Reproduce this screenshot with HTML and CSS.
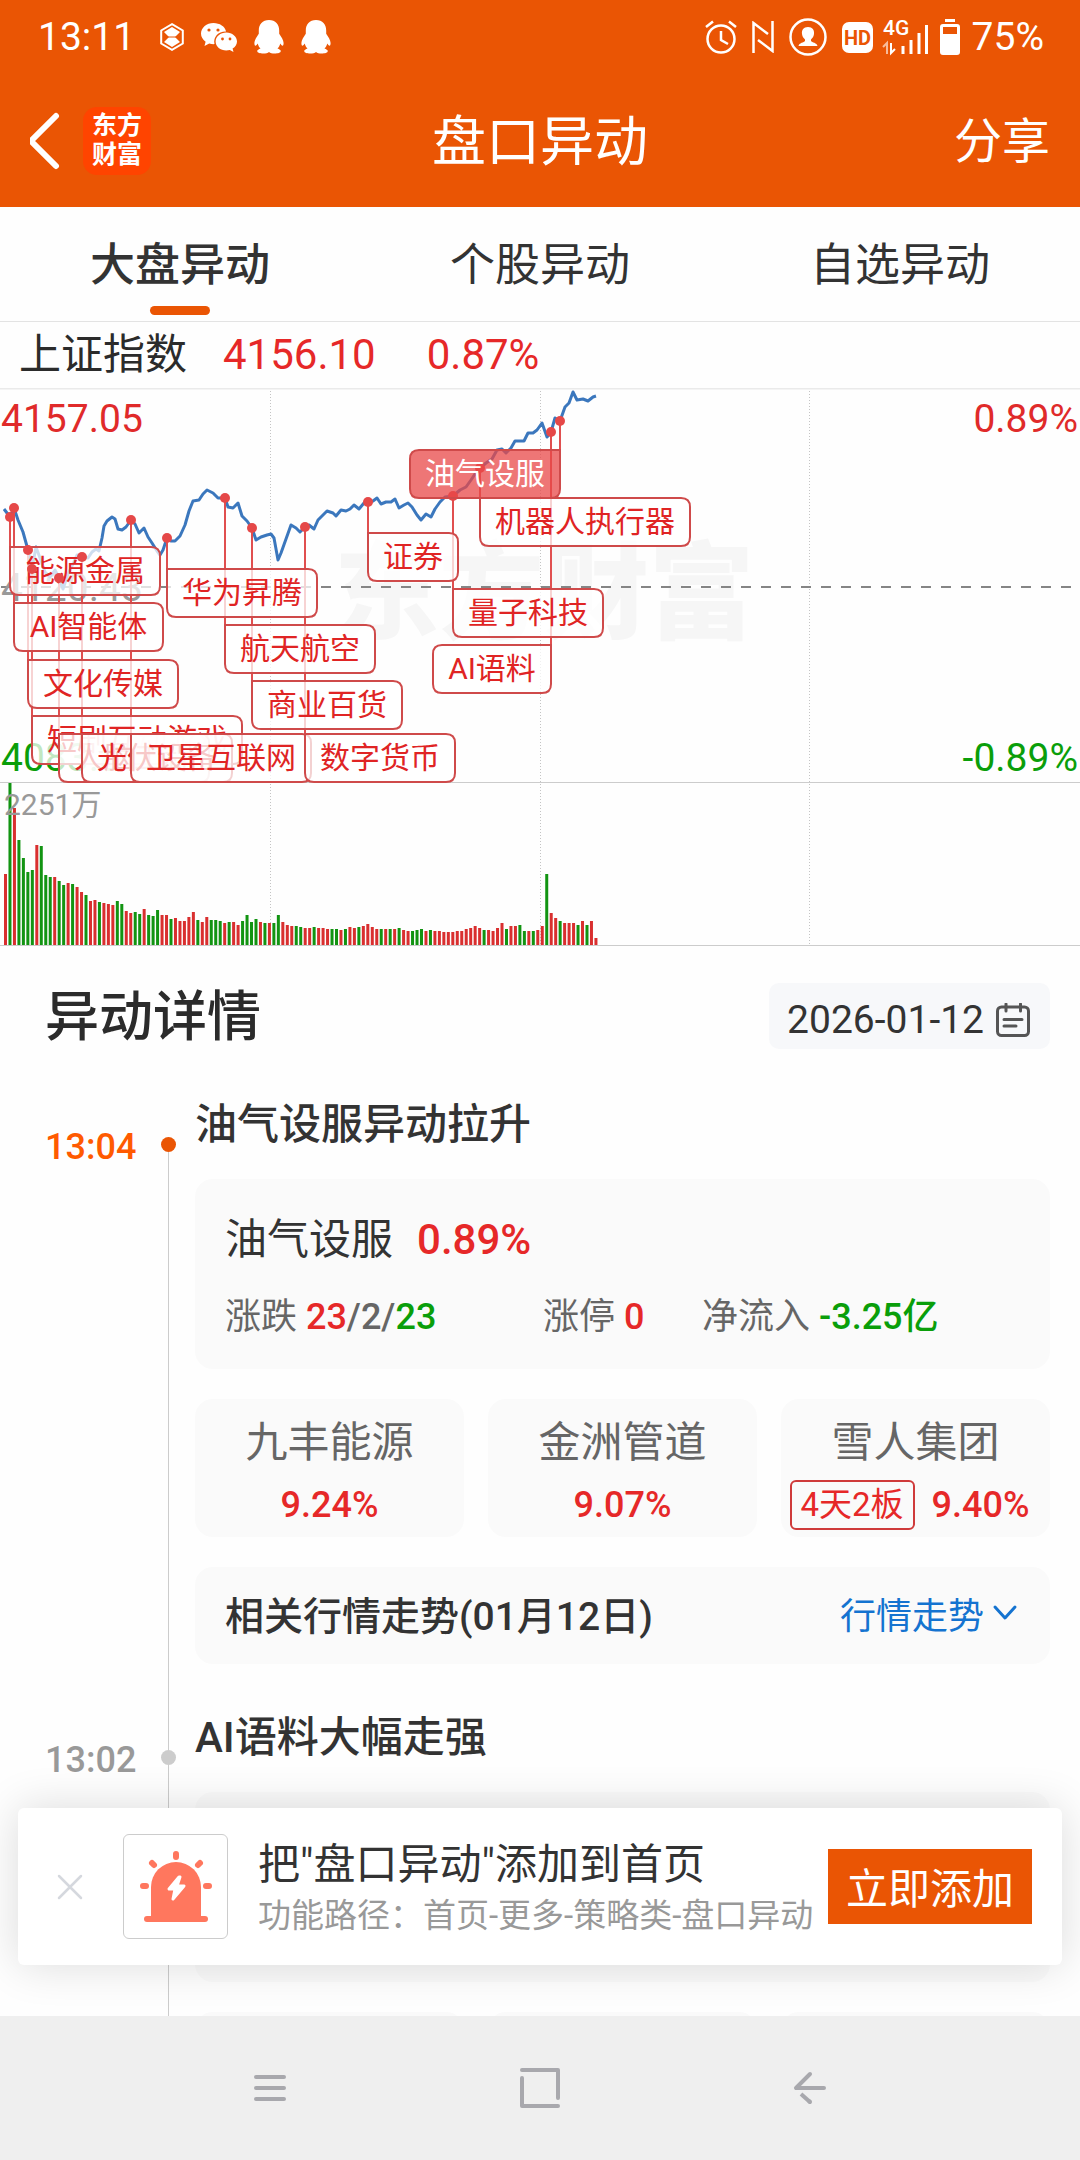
FILE: index.html
```html
<!DOCTYPE html>
<html lang="zh-CN">
<head>
<meta charset="utf-8">
<meta name="viewport" content="width=device-width, initial-scale=1">
<title>盘口异动</title>
<link rel="stylesheet" href="styles.css">
</head>
<body>
<div class="screen">
  <header class="header">
    <div class="status">
      <div class="status-group">
        <span class="status-time">13:11</span>
        <svg width="24" height="28" viewBox="0 0 24 28" fill="none" stroke="#fff" stroke-width="2"><path d="M12 1.200L22.800 7.500V20.500L12 26.800L1.200 20.500V7.500Z"/><path d="M12 4l8 5-5 5 5 5-8 5-8-5 5-5-5-5z" fill="#fff" stroke="none"/><path d="M7 14h10" stroke="#EA5504" stroke-width="1"/></svg>
        <svg width="36" height="30" viewBox="0 0 36 30"><path fill="#fff" d="M12.500 1C5.600 1 0 5.700 0 11.600c0 3.300 1.800 6.200 4.600 8.200L3.500 24l4.700-2.500c1.800.500 3.500.700 5.300.6-1.600-7.600 4.500-13 11.600-12.600C24 4.500 18.800 1 12.500 1z"/><path fill="#fff" d="M36 19.500c0-5-4.800-9-10.700-9s-10.700 4-10.700 9 4.800 9 10.700 9c1.200 0 2.400-.2 3.500-.5l3.700 2-.9-3.400c2.700-1.700 4.400-4.300 4.400-7.100z"/><g fill="#EA5504"><circle cx="8" cy="8" r="1.600"/><circle cx="17" cy="8" r="1.600"/><circle cx="21.500" cy="17" r="1.400"/><circle cx="29" cy="17" r="1.400"/></g></svg>
        <svg width="30" height="34" viewBox="0 0 30 34"><path id="qq" fill="#fff" d="M15 0C8.500 0 4.800 4.600 4.800 10.500v3.200C3 16.500.4 20 .4 23c0 1.600.4 2.700 1 2.700.8 0 1.700-1.100 2.300-2.300.4 1.800 1.400 3.600 2.800 5-1.700.6-3.300 1.500-3.300 2.700 0 1.800 3 2.500 6 2.500 2.500 0 4.700-.5 5.800-1.700 1.100 1.200 3.300 1.700 5.800 1.700 3 0 6-.7 6-2.500 0-1.200-1.600-2.100-3.300-2.700 1.400-1.400 2.400-3.200 2.800-5 .6 1.200 1.500 2.300 2.300 2.300.6 0 1-1.100 1-2.700 0-3-2.600-6.500-4.400-9.300v-3.200C25.200 4.600 21.500 0 15 0z"/></svg>
        <svg width="30" height="34" viewBox="0 0 30 34"><use href="#qq"/></svg>
      </div>
      <div class="status-right">
        <div class="status-icons">
          <svg width="32" height="34" viewBox="0 0 32 34" fill="none" stroke="#fff" stroke-width="2.500"><circle cx="16" cy="19" r="13.500"/><path d="M16 11v9l7 4M1 7l7-5.500M31 7l-7-5.500"/></svg>
          <svg width="22" height="32" viewBox="0 0 22 32" fill="none" stroke="#fff" stroke-width="2.500"><path d="M1.500 32V2L16 13M20.500 0v30L6 19"/></svg>
          <svg width="38" height="38" viewBox="0 0 38 38"><circle cx="19" cy="19" r="17.500" fill="none" stroke="#fff" stroke-width="2.500"/><path fill="#fff" d="M19 9c-4.500 0-6.500 3-6 7 .3 2.500 1.500 4 3 5.500v1.500c-1 1.500-6 1.800-6.500 5h19c-.5-3.200-5.500-3.500-6.500-5v-1.500c1.500-1.500 2.700-3 3-5.500.5-4-1.500-7-6-7z"/></svg>
          <svg width="31" height="31" viewBox="0 0 31 31"><rect width="31" height="31" rx="7" fill="#fff"/><text x="15.500" y="22.500" text-anchor="middle" font-size="20" font-weight="700" fill="#EA5504">HD</text></svg>
        </div>
        <div class="status-power">
          <svg class="signal" width="45" height="36" viewBox="0 0 45 36"><text x="0" y="16" font-size="21" font-weight="500" fill="#fff">4G</text><path d="M20 27v8M28 21v14M36 14v21M43.500 6v29" stroke="#fff" stroke-width="3"/><path d="M0 28l4-4v11" fill="none" stroke="#fff" stroke-opacity=".6" stroke-width="2"/><path d="M8 24v10l4-4" fill="none" stroke="#fff" stroke-width="2"/></svg>
          <svg width="20" height="36" viewBox="0 0 20 36"><path d="M5 0h10v3H5z" fill="#fff"/><path fill="#fff" fill-rule="evenodd" d="M3 5h14a3 3 0 0 1 3 3v25a3 3 0 0 1-3 3H3a3 3 0 0 1-3-3V8a3 3 0 0 1 3-3zm0 3v7h14V8z"/></svg>
          <span>75%</span>
        </div>
      </div>
    </div>
    <div class="titlebar">
      <div class="titlebar-left">
        <button class="back" type="button" aria-label="返回"><svg width="30" height="60" viewBox="3 0 30 60" fill="none" stroke="#fff" stroke-width="6" stroke-linecap="round" stroke-linejoin="round"><path d="M29 5L4 30l25 25"/></svg></button>
        <span class="brand"><span>东方</span><span>财富</span></span>
      </div>
      <h1 class="title">盘口异动</h1>
      <button class="share" type="button">分享</button>
    </div>
  </header>

  <main class="main">
    <nav class="tabs">
      <button class="tab tab-active" type="button">大盘异动</button>
      <button class="tab" type="button">个股异动</button>
      <button class="tab" type="button">自选异动</button>
    </nav>
    <div class="index-row">
      <span>上证指数</span>
      <span class="up index-value">4156.10</span>
      <span class="up">0.87%</span>
    </div>

    <svg class="chart" id="chart" viewBox="0 388 1080 558" role="img" aria-label="上证指数分时图">
      <text class="watermark" x="544" y="630" text-anchor="middle">东方财富</text>
      <g class="grid-dots"><path d="M270.500 391V945M540.500 391V945M809.500 391V945"/></g>
      <path d="M0 388.500H1080" stroke="#eaeaea" stroke-width="2"/>
      <path d="M0 782.500H1080M0 945.500H1080" stroke="#ccc"/>
      <path d="M1 587H1080" stroke="#858585" stroke-width="2" stroke-dasharray="10 10"/>
      <g class="axis">
        <text class="fill-up" x="1" y="432">4157.05</text>
        <text class="fill-up" x="1078" y="432" text-anchor="end">0.89%</text>
        <text class="fill-muted" x="1" y="601">4120.43</text>
        <text class="fill-down" x="1" y="771">4083.81</text>
        <text class="fill-down" x="1078" y="771" text-anchor="end">-0.89%</text>
      </g>
      <g id="volume"></g>
      <text class="volume-label" x="4" y="815">2251万</text>
      <polyline class="price" points="4,509 10,517 14,508 18,520 23,532 28,550 32,569 36,547 40,558 45,572 50,577 55,570 59,578 63,589 68,574 72,566 77,555 82,557 88,558 92,552 96,549 99,551 102,538 104,526 107,521 112,517 115,519 118,529 122,530 126,527 131,520 135,524 139,533 144,528 148,537 152,543 157,551 160,555 163,550 167,538 171,541 175,541 180,536 185,525 189,511 193,501 199,500 203,494 207,490 213,493 218,498 225,498 228,507 233,508 238,503 242,516 247,521 252,528 256,540 261,537 267,535 271,534 274,538 278,560 281,553 286,539 291,525 296,528 300,532 305,527 309,525 314,529 318,520 323,515 327,511 333,513 336,516 341,510 346,511 350,509 354,505 359,509 364,503 368,502 373,501 377,498 381,504 386,502 391,502 395,499 399,508 404,505 408,503 412,507 417,515 421,520 426,514 431,517 435,509 440,502 445,497 453,496 460,490 466,487 471,480 475,474 480,468 486,463 492,459 497,450 502,449 506,453 511,448 515,441 524,441 528,433 533,433 537,430 542,423 547,437 551,432 555,418 560,421 565,407 569,403 573,392 577,400 583,399 588,401 593,397 596,396"/>
      <g id="stems"></g>
      <g id="labels"></g>
    </svg>

    <section class="details">
      <div class="details-head">
        <h2 class="details-title">异动详情</h2>
        <button class="date" type="button">2026-01-12
          <svg width="34" height="34" viewBox="0 0 34 34" fill="none" stroke="#555" stroke-width="3" stroke-linecap="round"><rect x="1.500" y="4" width="31" height="28.500" rx="4"/><path d="M10 1v7M24.500 1v7M8 16.500h18M8 23h12"/></svg>
        </button>
      </div>

      <article class="event event-latest">
        <time class="event-time">13:04</time>
        <div class="rail"><i class="rail-top"></i><i class="rail-dot"></i><i class="rail-line"></i></div>
        <div class="event-body">
          <h3 class="event-title">油气设服异动拉升</h3>
          <div class="card sector">
            <div class="sector-name">油气设服<b class="up">0.89%</b></div>
            <div class="stats">
              <span>涨跌 <b><span class="up">23</span>/2/<span class="down">23</span></b></span>
              <span>涨停 <b class="up">0</b></span>
              <span>净流入 <b class="down">-3.25亿</b></span>
            </div>
          </div>
          <div class="stocks">
            <a class="card stock" href="#"><span class="stock-name">九丰能源</span><span class="stock-change">9.24%</span></a>
            <a class="card stock" href="#"><span class="stock-name">金洲管道</span><span class="stock-change">9.07%</span></a>
            <a class="card stock" href="#"><span class="stock-name">雪人集团</span><span class="stock-change tagged"><span class="tag">4天2板</span>9.40%</span></a>
          </div>
          <button class="card trend" type="button">
            <span class="trend-title">相关行情走势(01月12日)</span>
            <span class="trend-link">行情走势
              <svg width="26" height="18" viewBox="0 0 26 18" fill="none" stroke="#1473D0" stroke-width="3" stroke-linecap="round" stroke-linejoin="round"><path d="M3 3l10 11L23 3"/></svg>
            </span>
          </button>
        </div>
      </article>

      <article class="event">
        <time class="event-time">13:02</time>
        <div class="rail"><i class="rail-top"></i><i class="rail-dot"></i><i class="rail-line"></i></div>
        <div class="event-body">
          <h3 class="event-title">AI语料大幅走强</h3>
          <div class="card sector"></div>
          <div class="stocks">
            <div class="card stock"></div>
            <div class="card stock"></div>
            <div class="card stock"></div>
          </div>
        </div>
      </article>
    </section>
  </main>

  <div class="dock">
    <aside class="toast">
      <button class="toast-close" type="button" aria-label="关闭"><svg width="26" height="26" viewBox="0 0 26 26" stroke="#D5D8DE" stroke-width="2.500" stroke-linecap="round"><path d="M2 2l22 22M24 2L2 24"/></svg></button>
      <span class="toast-icon">
        <svg width="74" height="74" viewBox="0 0 74 74"><g fill="#FF775E"><path d="M12 66V37a25 25 0 0 1 50 0v29z"/><rect x="5" y="66" width="64" height="6" rx="3"/></g><g stroke="#FF775E" stroke-width="6" stroke-linecap="round"><path d="M37 4v3M13 13l2 2M61 13l-2 2M4 36h3M67 36h3"/></g><path fill="#fff" stroke="#fff" stroke-width="3" stroke-linejoin="round" d="M40 27L30 39h6l-2 10 11-13h-7l3-9z"/></svg>
      </span>
      <div class="toast-text">
        <p class="toast-title">把"盘口异动"添加到首页</p>
        <p class="toast-path">功能路径：首页-更多-策略类-盘口异动</p>
      </div>
      <button class="toast-add" type="button">立即添加</button>
    </aside>
    <nav class="sysnav">
      <button type="button" aria-label="菜单"><svg width="40" height="40" viewBox="0 0 40 40" stroke="#A8A8AD" stroke-width="4" stroke-linecap="round"><path d="M6 9h28M6 20h28M6 31h28"/></svg></button>
      <button type="button" aria-label="主屏幕"><svg width="40" height="40" viewBox="0 0 40 40" fill="none" stroke="#A8A8AD" stroke-width="4" stroke-linecap="round" stroke-linejoin="round"><path d="M2 2h36v28M2 10v28h36"/></svg></button>
      <button type="button" aria-label="返回"><svg width="40" height="40" viewBox="0 0 40 40" fill="none" stroke="#A8A8AD" stroke-width="4" stroke-linejoin="round"><path stroke-linecap="round" d="M20 6L6 20h28M20 34l-1-1"/><path d="M20.500 34.500L11 26"/></svg></button>
    </nav>
  </div>
</div>
<script src="chart.js"></script>
</body>
</html>
```
FILE: styles.css
```css
* { box-sizing: border-box; }

body {
  margin: 0;
  background: #fefefe;
  color: #333;
  font-family: Roboto, "Noto Sans CJK SC", sans-serif;
  font-size: 36px;
}

h1, h2, h3, p { margin: 0; font-weight: 400; }
b { font-weight: 500; }
svg { display: block; flex: none; }

button {
  padding: 0;
  border: 0;
  background: none;
  color: inherit;
  font: inherit;
}

a { color: inherit; text-decoration: none; }

.up { color: #e62828; }
.down { color: #0a9e0a; }

.screen {
  display: flex;
  flex-direction: column;
  height: 100vh;
  overflow: hidden;
}

/* Header */
.header { flex: none; background: #ea5504; color: #fff; }

.status {
  display: flex;
  justify-content: space-between;
  align-items: center;
  height: 74px;
  padding: 0 36px 0 38px;
  font-size: 39px;
}

.status-group { display: flex; align-items: center; gap: 17px; }
.status-time { margin-right: 8px; }
.status-right { display: flex; align-items: center; gap: 10px; }
.status-icons { display: flex; align-items: center; gap: 15px; }
.status-power { display: flex; align-items: center; gap: 12px; }
.signal { overflow: visible; }

.titlebar {
  display: grid;
  grid-template-columns: 1fr auto 1fr;
  align-items: center;
  height: 133px;
  padding: 0 30px;
}

.titlebar-left { display: flex; align-items: center; gap: 23px; }

.brand {
  display: flex;
  flex-direction: column;
  justify-content: center;
  align-items: center;
  width: 68px;
  height: 68px;
  padding-bottom: 2px;
  border-radius: 14px;
  background: #ff4400;
  font-size: 25px;
  font-weight: 700;
  line-height: 29px;
}

.title { padding-top: 5px; font-size: 54px; line-height: 80px; }
.share { justify-self: end; padding-bottom: 7px; font-size: 48px; }

/* Tabs and index line */
.main { flex: 1; min-height: 0; overflow: hidden; }

.tabs {
  display: grid;
  grid-template-columns: repeat(3, 1fr);
  height: 115px;
  border-bottom: 1px solid #e3e3e3;
}

.tab { position: relative; padding-bottom: 5px; font-size: 45px; }
.tab-active { font-weight: 500; }

.tab-active::after {
  content: "";
  position: absolute;
  bottom: 6px;
  left: 50%;
  width: 60px;
  height: 9px;
  margin-left: -30px;
  border-radius: 5px;
  background: #ea5504;
}

.index-row {
  display: flex;
  align-items: center;
  height: 66px;
  padding: 0 19px;
  color: #2b2b2b;
  font-size: 42px;
  line-height: 66px;
}

.index-value { margin: 0 51px 0 36px; }

/* Chart */
.chart { width: 100%; height: auto; }
.watermark { font-size: 105px; font-weight: 900; fill: #f6f6f6; }
.grid-dots { stroke: #c4c4c4; stroke-dasharray: 1 2; }
.axis { font-size: 39px; }
.fill-up { fill: #e02a2a; }
.fill-down { fill: #0a9e0a; }
.fill-muted { fill: #999; }
.volume-label { font-size: 30px; fill: #999; }
.price { fill: none; stroke: #3b77bd; stroke-width: 3; stroke-linejoin: round; }
.bar-up { fill: #d92f2f; }
.bar-down { fill: #129412; }
.stem { stroke: #e04f4f; stroke-width: 2; }
.dot { fill: #e54848; }
.flag { fill: #fff; fill-opacity: .75; stroke: #cf4a4a; stroke-width: 2; }
.flag-text { font-size: 30px; fill: #e02424; text-anchor: middle; }
.flag-current { fill: #e84848; }
.flag-text-current { fill: #fff; }

/* Details */
.details { padding: 37px 30px 0 45px; }

.details-head {
  display: flex;
  justify-content: space-between;
  align-items: center;
  height: 66px;
  margin-bottom: 45px;
}

.details-title { padding-top: 4px; color: #2b2b2b; font-size: 54px; font-weight: 500; line-height: 66px; }

.date {
  display: flex;
  align-items: center;
  gap: 12px;
  height: 66px;
  padding: 8px 20px 0 18px;
  border-radius: 10px;
  background: #f7f8fa;
  font-size: 39px;
}

.event { display: grid; grid-template-columns: 116px 15px 1fr; }

.event-time {
  padding-top: 23px;
  color: #999;
  font-size: 36px;
  font-weight: 500;
  line-height: 60px;
}

.event-latest .event-time { color: #ff5a00; }

.rail { display: flex; flex-direction: column; align-items: center; }
.rail-top, .rail-line { width: 1px; background: #ccc; }
.rail-top { height: 43px; }
.rail-line { flex: 1; }
.rail-dot { width: 15px; height: 15px; border-radius: 50%; background: #ccc; }
.event-latest .rail-dot { background: #ea5504; }
.event-latest .rail-top { background: none; }

.event-body {
  display: flex;
  flex-direction: column;
  gap: 30px;
  padding: 0 0 43px 19px;
}

.event-title { margin-bottom: -7px; font-size: 42px; font-weight: 500; line-height: 62px; }
.card { border-radius: 18px; background: #fafafa; }

.sector { height: 190px; padding: 31px 30px 0; }
.sector-name { font-size: 42px; line-height: 60px; }
.sector-name b { margin-left: 24px; }

.stats {
  display: grid;
  grid-template-columns: 2fr 1fr 2fr;
  margin-top: 20px;
  color: #666;
  line-height: 54px;
  white-space: nowrap;
}

.stocks { display: grid; grid-template-columns: repeat(3, 1fr); gap: 24px; }

.stock {
  display: flex;
  flex-direction: column;
  align-items: center;
  height: 138px;
  padding-top: 14px;
}

.stock-name { color: #666; font-size: 42px; line-height: 60px; }

.stock-change {
  display: flex;
  align-items: center;
  gap: 17px;
  height: 66px;
  color: #e62828;
  font-weight: 500;
}

.tagged { padding-right: 12px; }

.tag {
  padding: 0 9px;
  border: 2px solid #cf3a3a;
  border-radius: 6px;
  font-size: 33px;
  font-weight: 400;
  line-height: 46px;
}

.trend {
  display: flex;
  justify-content: space-between;
  align-items: center;
  height: 97px;
  padding: 0 32px 5px 30px;
}

.trend-title { font-size: 39px; font-weight: 500; }
.trend-link { display: flex; align-items: center; gap: 8px; color: #1473d0; }

/* Toast and system bar */
.dock { position: relative; flex: none; }

.toast {
  position: absolute;
  right: 18px;
  bottom: 195px;
  left: 18px;
  display: flex;
  align-items: center;
  height: 157px;
  padding: 0 30px 0 39px;
  border-radius: 6px;
  background: #fff;
  box-shadow: 0 0 45px rgba(0, 0, 0, .14);
}

.toast-close { margin-right: 40px; }

.toast-icon {
  display: grid;
  place-items: center;
  flex: none;
  width: 105px;
  height: 105px;
  margin-right: 30px;
  border: 1px solid #ccc;
  border-radius: 6px;
}

.toast-text { flex: 1; padding-top: 5px; white-space: nowrap; }
.toast-title { font-size: 42px; line-height: 54px; }
.toast-path { color: #999; font-size: 33px; line-height: 48px; }

.toast-add {
  flex: none;
  width: 204px;
  height: 75px;
  padding-bottom: 3px;
  background: #ea5504;
  color: #fff;
  font-size: 42px;
}

.sysnav {
  display: grid;
  grid-template-columns: repeat(3, 1fr);
  justify-items: center;
  align-items: center;
  height: 144px;
  padding: 0 12.5%;
  background: #efefef;
}
```
FILE: chart.js
```js
const NS = "http://www.w3.org/2000/svg";

function add(parent, tag, attrs, text) {
  const el = document.createElementNS(NS, tag);
  for (const key in attrs) el.setAttribute(key, attrs[key]);
  if (text) el.textContent = text;
  parent.appendChild(el);
}

// Minute volume: r = price up, g = price down
const volumes = (
  "r71 g162 r137 g105 g87 g73 g75 r100 g99 g70 g68 r68 g64 g60 r62 g61 r58 r53 g50 r44 r45 g43 r42 r41 r40 " +
  "g44 g41 r34 r32 g33 g31 r36 g30 g29 g35 r30 r30 g26 r27 r24 r24 r28 r33 g25 r23 r28 g25 g25 g24 r22 g23 " +
  "r23 r20 g24 g30 g23 g26 r23 g22 r22 g22 g30 r23 r20 r19 g19 g18 r17 r17 g18 r17 r17 r16 g16 g16 r15 g16 " +
  "r18 r17 g18 r19 r21 r18 r16 g16 r16 g16 r16 g17 r15 r14 g14 g15 g16 r14 g15 r14 r14 r13 r13 r13 r14 r14 " +
  "r16 r17 r19 r17 g15 r15 r14 r17 r22 g16 r19 r19 g20 g14 r14 g14 r15 r19 g71 r32 r27 g24 r22 r22 r22 g20 " +
  "r24 g20 r24 r7"
).split(" ");

const volumeLayer = document.getElementById("volume");
volumes.forEach((v, i) => {
  const h = Number(v.slice(1));
  add(volumeLayer, "rect", {
    class: v[0] === "r" ? "bar-up" : "bar-down",
    x: (4 + i * 4.473).toFixed(2), y: 945 - h, width: 3, height: h
  });
});

// name, point x, point y, flag top, flag width, side of the stem
const flags = [
  ["能源金属", 10, 517, 547, 150, "left"],
  ["AI智能体", 14, 508, 603, 149, "left"],
  ["文化传媒", 28, 550, 660, 150, "left"],
  ["短剧互动游戏", 32, 569, 716, 210, "left"],
  ["人脑工程", 59, 578, 734, 150, "left"],
  ["光伏设备", 82, 557, 734, 150, "left"],
  ["卫星互联网", 131, 520, 734, 180, "left"],
  ["华为昇腾", 167, 538, 569, 150, "left"],
  ["航天航空", 225, 498, 625, 150, "left"],
  ["商业百货", 252, 528, 681, 150, "left"],
  ["数字货币", 305, 527, 734, 150, "left"],
  ["证券", 368, 502, 533, 90, "left"],
  ["量子科技", 453, 496, 589, 150, "left"],
  ["机器人执行器", 480, 468, 498, 210, "left"],
  ["AI语料", 551, 432, 645, 118, "right"],
  ["油气设服", 560, 421, 450, 150, "current"]
];

const stems = document.getElementById("stems");
const labels = document.getElementById("labels");
const H = 48;
const R = 9;

flags.forEach(([name, px, py, top, w, side]) => {
  add(stems, "path", { class: "stem", d: `M${px} ${py}V${top}` });
});

flags.forEach(([name, px, py, top, w, side], i) => {
  const current = side === "current";
  const x = side === "left" ? px : px - w;
  const topLeft = side === "left" ? `M${x} ${top}` : `M${x} ${top + R}q0-${R} ${R}-${R}`;
  const topRight = side === "left" ? `H${x + w - R}q${R} 0 ${R} ${R}` : `H${x + w}`;
  if (current) {
    flags.slice(0, i).forEach(f => add(labels, "circle", { class: "dot", cx: f[1], cy: f[2], r: 5 }));
  }
  add(labels, "path", {
    class: current ? "flag flag-current" : "flag",
    d: `${topLeft}${topRight}V${top + H - R}q0 ${R}-${R} ${R}H${x + R}q-${R} 0-${R}-${R}Z`
  });
  add(labels, "text", {
    class: current ? "flag-text flag-text-current" : "flag-text",
    x: x + w / 2, y: top + 34
  }, name);
  if (current) add(labels, "circle", { class: "dot", cx: px, cy: py, r: 5 });
});
```
